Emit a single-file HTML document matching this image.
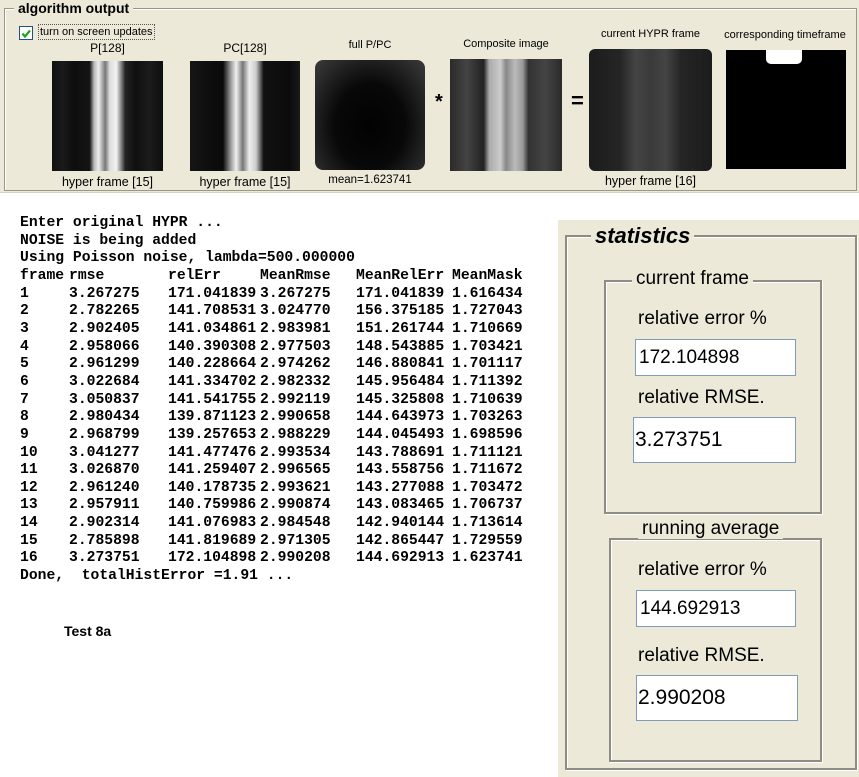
<!DOCTYPE html>
<html><head><style>
*{margin:0;padding:0;box-sizing:border-box}
body{width:859px;height:777px;background:#fff;position:relative;overflow:hidden;font-family:"Liberation Sans",sans-serif}
.abs{position:absolute}
.top{left:0;top:0;width:859px;height:193px;background:#ece9d8;border-bottom:1px solid #d6d2c0}
.gb{position:absolute}
.lbl{position:absolute;font-size:11px;color:#000;white-space:nowrap;text-align:center}
.img{position:absolute}
.mono{position:absolute;font-family:"Liberation Mono",monospace;font-weight:bold;font-size:14.7px;color:#000;white-space:pre;line-height:17.65px}
.row{position:absolute;left:0;height:18px;width:540px}
.row span{position:absolute;top:0}
.c1{left:20px}.c2{left:69px}.c3{left:168px}.c4{left:260px}.c5{left:356px}.c6{left:452px}
.stat{left:558px;top:220px;width:301px;height:557px;background:#ece9d8}
.fs{position:absolute;border:2px solid #8e8c84;box-shadow:1px 1px 0 #fff inset,1px 1px 0 #fff}
.leg{position:absolute;background:#ece9d8;padding:0 4px;font-size:19px;white-space:nowrap;line-height:20px}
.inp{position:absolute;background:#fff;border:1px solid #7f9db9;font-size:19px;line-height:normal;padding-left:3px;display:flex;align-items:center}
.sl{position:absolute;font-size:19px;white-space:nowrap}
</style></head><body>
<div class="abs top">
  <div class="gb" style="left:4px;top:8px;width:853px;height:183px;border:1px solid #9a978a;box-shadow:1px 1px 0 #fff inset"></div>
  <div class="abs" style="left:14px;top:0;background:#ece9d8;padding:0 4px;font-weight:bold;font-size:14px;line-height:16px">algorithm output</div>
  <div class="abs" style="left:19px;top:26px;width:14px;height:14px;background:#fff;border:1px solid #1c5180"><svg width="12" height="12" viewBox="0 0 12 12"><path d="M2.5 5.5 L5 8.5 L10 2.5" fill="none" stroke="#21a121" stroke-width="2.2"/></svg></div>
  <div class="abs" style="left:38px;top:24px;font-size:11px;border:1px dotted #555;padding:0 1px;line-height:14px">turn on screen updates</div>
  <div class="lbl" style="left:52px;top:41px;width:111px;font-size:12px">P[128]</div>
  <div class="img" style="left:52px;top:61px;width:111px;height:110px;background:linear-gradient(90deg,#111 0,#1a1a1a 10%,#0d0d0d 20%,#151515 34%,#bbb 38%,#eee 42%,#777 48%,#ddd 52%,#f2f2f2 58%,#222 66%,#101010 75%,#1b1b1b 88%,#0e0e0e 100%)"></div>
  <div class="lbl" style="left:47px;top:175px;width:121px;font-size:12.5px">hyper frame [15]</div>
  <div class="lbl" style="left:190px;top:41px;width:110px;font-size:12px">PC[128]</div>
  <div class="img" style="left:190px;top:61px;width:110px;height:110px;background:linear-gradient(90deg,#151515 0,#0a0a0a 30%,#999 37%,#f0f0f0 42%,#777 48%,#eee 54%,#ccc 60%,#111 67%,#0b0b0b 90%,#1a1a1a 100%)"></div>
  <div class="lbl" style="left:185px;top:175px;width:120px;font-size:12.5px">hyper frame [15]</div>
  <div class="lbl" style="left:315px;top:39px;width:110px">full P/PC</div>
  <div class="img" style="left:315px;top:60px;width:110px;height:110px;border-radius:8px;background:radial-gradient(ellipse at 50% 60%,#020202 0,#080808 45%,#2e2e2e 85%,#3a3a3a 100%)"></div>
  <div class="lbl" style="left:315px;top:174px;width:110px;font-size:11.5px">mean=1.623741</div>
  <div class="lbl" style="left:435px;top:91px;font-size:20px;font-weight:bold">*</div>
  <div class="lbl" style="left:450px;top:38px;width:112px">Composite image</div>
  <div class="img" style="left:450px;top:59px;width:112px;height:112px;background:linear-gradient(90deg,#2a2a2a 0,#444 15%,#222 30%,#aaa 35%,#ccc 45%,#888 50%,#bbb 58%,#999 65%,#333 70%,#444 85%,#2a2a2a 100%)"></div>
  <div class="lbl" style="left:571px;top:88px;font-size:22px;font-weight:bold">=</div>
  <div class="lbl" style="left:589px;top:28px;width:123px">current HYPR frame</div>
  <div class="img" style="left:589px;top:49px;width:123px;height:122px;border-radius:6px;background:linear-gradient(90deg,#1c1c1c 0,#252525 25%,#444 38%,#3a3a3a 50%,#444 62%,#252525 75%,#1c1c1c 100%)"></div>
  <div class="lbl" style="left:584px;top:174px;width:133px;font-size:12.5px">hyper frame [16]</div>
  <div class="lbl" style="left:720px;top:29px;width:130px">corresponding timeframe</div>
  <div class="img" style="left:726px;top:50px;width:120px;height:119px;background:#000"><div class="abs" style="left:40px;top:0;width:36px;height:14px;background:#fff;border-radius:0 0 5px 5px"></div></div>
</div>

<div class="mono" style="left:20px;top:215px">Enter original HYPR ...
NOISE is being added
Using Poisson noise, lambda=500.000000</div>
<div class="mono" style="left:0;top:268px;width:540px;height:300px">
<div class="row" style="top:0"><span class="c1">frame</span><span class="c2">rmse</span><span class="c3">relErr</span><span class="c4">MeanRmse</span><span class="c5">MeanRelErr</span><span class="c6">MeanMask</span></div>
<div class="row" style="top:17.65px"><span class="c1">1</span><span class="c2">3.267275</span><span class="c3">171.041839</span><span class="c4">3.267275</span><span class="c5">171.041839</span><span class="c6">1.616434</span></div>
<div class="row" style="top:35.3px"><span class="c1">2</span><span class="c2">2.782265</span><span class="c3">141.708531</span><span class="c4">3.024770</span><span class="c5">156.375185</span><span class="c6">1.727043</span></div>
<div class="row" style="top:52.95px"><span class="c1">3</span><span class="c2">2.902405</span><span class="c3">141.034861</span><span class="c4">2.983981</span><span class="c5">151.261744</span><span class="c6">1.710669</span></div>
<div class="row" style="top:70.6px"><span class="c1">4</span><span class="c2">2.958066</span><span class="c3">140.390308</span><span class="c4">2.977503</span><span class="c5">148.543885</span><span class="c6">1.703421</span></div>
<div class="row" style="top:88.25px"><span class="c1">5</span><span class="c2">2.961299</span><span class="c3">140.228664</span><span class="c4">2.974262</span><span class="c5">146.880841</span><span class="c6">1.701117</span></div>
<div class="row" style="top:105.9px"><span class="c1">6</span><span class="c2">3.022684</span><span class="c3">141.334702</span><span class="c4">2.982332</span><span class="c5">145.956484</span><span class="c6">1.711392</span></div>
<div class="row" style="top:123.55px"><span class="c1">7</span><span class="c2">3.050837</span><span class="c3">141.541755</span><span class="c4">2.992119</span><span class="c5">145.325808</span><span class="c6">1.710639</span></div>
<div class="row" style="top:141.2px"><span class="c1">8</span><span class="c2">2.980434</span><span class="c3">139.871123</span><span class="c4">2.990658</span><span class="c5">144.643973</span><span class="c6">1.703263</span></div>
<div class="row" style="top:158.85px"><span class="c1">9</span><span class="c2">2.968799</span><span class="c3">139.257653</span><span class="c4">2.988229</span><span class="c5">144.045493</span><span class="c6">1.698596</span></div>
<div class="row" style="top:176.5px"><span class="c1">10</span><span class="c2">3.041277</span><span class="c3">141.477476</span><span class="c4">2.993534</span><span class="c5">143.788691</span><span class="c6">1.711121</span></div>
<div class="row" style="top:194.15px"><span class="c1">11</span><span class="c2">3.026870</span><span class="c3">141.259407</span><span class="c4">2.996565</span><span class="c5">143.558756</span><span class="c6">1.711672</span></div>
<div class="row" style="top:211.8px"><span class="c1">12</span><span class="c2">2.961240</span><span class="c3">140.178735</span><span class="c4">2.993621</span><span class="c5">143.277088</span><span class="c6">1.703472</span></div>
<div class="row" style="top:229.45px"><span class="c1">13</span><span class="c2">2.957911</span><span class="c3">140.759986</span><span class="c4">2.990874</span><span class="c5">143.083465</span><span class="c6">1.706737</span></div>
<div class="row" style="top:247.1px"><span class="c1">14</span><span class="c2">2.902314</span><span class="c3">141.076983</span><span class="c4">2.984548</span><span class="c5">142.940144</span><span class="c6">1.713614</span></div>
<div class="row" style="top:264.75px"><span class="c1">15</span><span class="c2">2.785898</span><span class="c3">141.819689</span><span class="c4">2.971305</span><span class="c5">142.865447</span><span class="c6">1.729559</span></div>
<div class="row" style="top:282.4px"><span class="c1">16</span><span class="c2">3.273751</span><span class="c3">172.104898</span><span class="c4">2.990208</span><span class="c5">144.692913</span><span class="c6">1.623741</span></div>
</div>
<div class="mono" style="left:20px;top:568px">Done,  totalHistError =1.91 ...</div>
<div class="abs" style="left:64px;top:623px;font-weight:bold;font-size:14px">Test 8a</div>

<div class="abs stat">
  <div class="fs" style="left:7px;top:15px;width:292px;height:535px"></div>
  <div class="leg" style="left:33px;top:4px;font-weight:bold;font-style:italic;font-size:22px;line-height:24px">statistics</div>
  <div class="fs" style="left:46px;top:60px;width:218px;height:234px"></div>
  <div class="leg" style="left:74px;top:49px">current frame</div>
  <div class="sl" style="left:80px;top:88px">relative error %</div>
  <div class="inp" style="left:77px;top:119px;width:161px;height:37px">172.104898</div>
  <div class="sl" style="left:80px;top:167px">relative RMSE.</div>
  <div class="inp" style="left:75px;top:197px;width:163px;height:46px;font-size:21px;padding-left:1px">3.273751</div>
  <div class="fs" style="left:51px;top:318px;width:213px;height:224px"></div>
  <div class="leg" style="left:80px;top:299px">running average</div>
  <div class="sl" style="left:80px;top:339px">relative error %</div>
  <div class="inp" style="left:78px;top:370px;width:160px;height:37px">144.692913</div>
  <div class="sl" style="left:80px;top:425px">relative RMSE.</div>
  <div class="inp" style="left:78px;top:455px;width:162px;height:46px;font-size:21px;padding-left:1px">2.990208</div>
</div>
</body></html>
